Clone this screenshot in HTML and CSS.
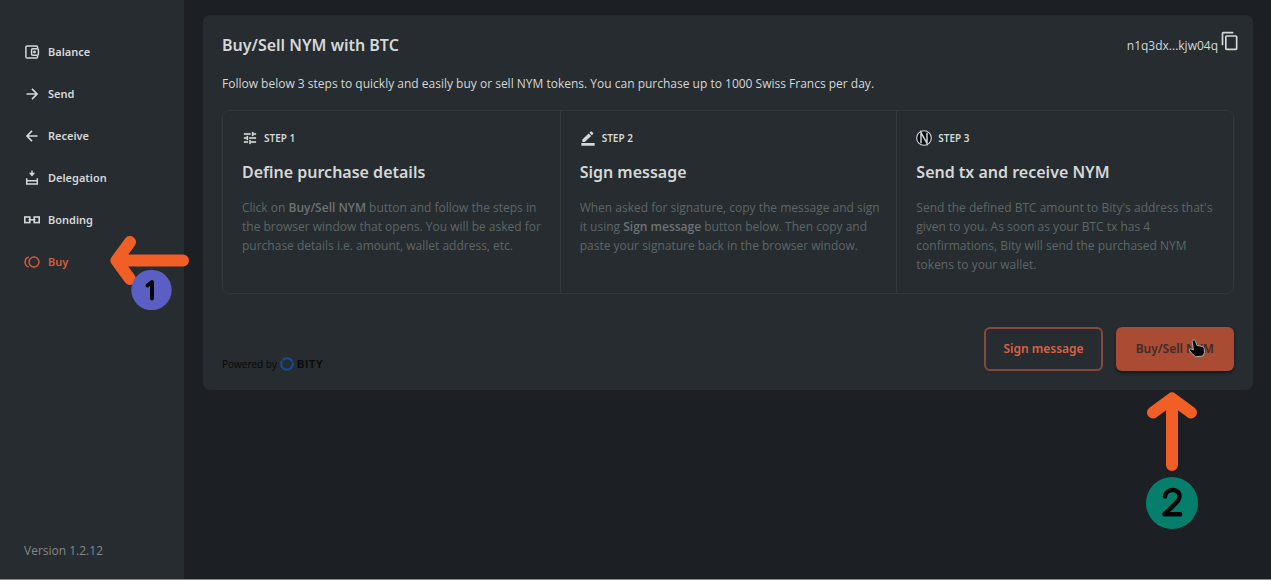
FILE: index.html
```html
<!DOCTYPE html>
<html lang="en">
<head>
<meta charset="utf-8">
<meta name="viewport" content="width=device-width, initial-scale=1">
<title>Nym Wallet - Buy</title>
<link rel="stylesheet" href="styles.css">
</head>
<body>
<div class="app">
  <aside class="sidebar">
    <nav class="nav">
      <a class="nav-item" href="#balance">
        <svg class="nav-icon" viewBox="0 0 16 16" fill="none" stroke="currentColor" stroke-width="1.5"><path d="M13.6 4V3.2a1.3 1.3 0 0 0-1.3-1.3H3.2a1.3 1.3 0 0 0-1.3 1.3v9.6a1.3 1.3 0 0 0 1.3 1.3h9.1a1.3 1.3 0 0 0 1.3-1.3V12"/><rect x="7.6" y="4.7" width="6.8" height="6.6" rx="1"/><circle cx="10.5" cy="8" r=".7"/></svg>
        <span>Balance</span>
      </a>
      <a class="nav-item" href="#send">
        <svg class="nav-icon" viewBox="0 0 16 16" fill="none" stroke="currentColor" stroke-width="1.6"><path d="M2.5 8h10.3M8 2.9 13.1 8 8 13.1"/></svg>
        <span>Send</span>
      </a>
      <a class="nav-item" href="#receive">
        <svg class="nav-icon" viewBox="0 0 16 16" fill="none" stroke="currentColor" stroke-width="1.6"><path d="M13.5 8H3.2M8 2.9 2.9 8 8 13.1"/></svg>
        <span>Receive</span>
      </a>
      <a class="nav-item" href="#delegation">
        <svg class="nav-icon" viewBox="0 0 16 16" fill="none" stroke="currentColor" stroke-width="1.5"><path d="M2.7 8.200v5.800h10.600V8.200M2.700 10.800h10.600"/><path d="M7.300.6h1.400v2.200h2.400L8 6.400 4.900 2.800h2.400z" fill="currentColor" stroke="none"/></svg>
        <span>Delegation</span>
      </a>
      <a class="nav-item" href="#bonding">
        <svg class="nav-icon" viewBox="0 0 16 16" fill="none" stroke="currentColor" stroke-width="1.6"><rect x=".8" y="5" width="5" height="5.600"/><rect x="10.200" y="5" width="5" height="5.600"/><path d="M4.500 7.800h7"/></svg>
        <span>Bonding</span>
      </a>
      <a class="nav-item nav-item-active" href="#buy" aria-current="page">
        <svg class="nav-icon" viewBox="0 0 16 16" fill="none" stroke="currentColor" stroke-width="1.400"><circle cx="10" cy="8" r="5"/><path d="M4.600 3a5.300 5.300 0 0 0 0 10"/></svg>
        <span>Buy</span>
        <svg class="callout callout-one" viewBox="0 0 84 80" aria-label="1"><path d="M20 12 6.500 30.500 20 49M7 30.500h66" fill="none" stroke="#f15f27" stroke-width="12" stroke-linecap="round" stroke-linejoin="round"/><circle cx="41.500" cy="60" r="20.200" fill="#5b5fc4"/><path d="M37.500 55.500 42 52v16.500" fill="none" stroke="#050508" stroke-width="4" stroke-linecap="round" stroke-linejoin="round"/></svg>
      </a>
    </nav>
    <p class="version">Version 1.2.12</p>
  </aside>

  <main class="main">
    <section class="card">
      <header class="card-head">
        <h1 class="title">Buy/Sell NYM with BTC</h1>
        <div class="wallet">
          <span class="address">n1q3dx...kjw04q</span>
          <button class="copy" type="button" aria-label="Copy address">
            <svg viewBox="0 0 24 24" fill="currentColor"><path d="M16 1H4c-1.100 0-2 .9-2 2v14h2V3h12V1zm3 4H8c-1.100 0-2 .9-2 2v14c0 1.100.9 2 2 2h11c1.100 0 2-.9 2-2V7c0-1.100-.9-2-2-2zm0 16H8V7h11v14z"/></svg>
          </button>
        </div>
      </header>
      <p class="intro">Follow below 3 steps to quickly and easily buy or sell NYM tokens. You can purchase up to 1000 Swiss Francs per day.</p>
      <div class="steps">
        <article class="step">
          <div class="step-label">
            <svg viewBox="0 0 24 24" fill="currentColor"><path d="M3 17v2h6v-2H3zM3 5v2h10V5H3zm10 16v-2h8v-2h-8v-2h-2v6h2zM7 9v2H3v2h4v2h2V9H7zm14 4v-2H11v2h10zm-6-4h2V7h4V5h-4V3h-2v6z" stroke="currentColor" stroke-width=".4"/></svg>
            <span>STEP 1</span>
          </div>
          <h2 class="step-title">Define purchase details</h2>
          <p class="step-text">Click on <strong>Buy/Sell NYM</strong> button and follow the steps in the browser window that opens. You will be asked for purchase details i.e. amount, wallet address, etc.</p>
        </article>
        <article class="step">
          <div class="step-label">
            <svg viewBox="0 0 24 24" fill="currentColor"><path d="M2 19.500h20v4H2zM3.500 14.300V18h3.700L16.700 9 13 5.300zM19.700 6a1 1 0 0 0 0-1.400L17.400 2.300a1 1 0 0 0-1.400 0L14.100 4.200 17.800 7.900z"/></svg>
            <span>STEP 2</span>
          </div>
          <h2 class="step-title">Sign message</h2>
          <p class="step-text">When asked for signature, copy the message and sign it using <strong>Sign message</strong> button below. Then copy and paste your signature back in the browser window.</p>
        </article>
        <article class="step">
          <div class="step-label">
            <svg viewBox="0 0 24 24" fill="none" stroke="currentColor"><circle cx="12" cy="12" r="11" fill="#0b0e10" stroke-width="1.600"/><path d="M7.500 20V4L16.500 20V4" stroke-width="2.200"/></svg>
            <span>STEP 3</span>
          </div>
          <h2 class="step-title">Send tx and receive NYM</h2>
          <p class="step-text">Send the defined BTC amount to Bity's address that's given to you. As soon as your BTC tx has 4 confirmations, Bity will send the purchased NYM tokens to your wallet.</p>
        </article>
      </div>
      <footer class="card-foot">
        <div class="powered">
          <span>Powered by</span>
          <svg class="bity-ring" viewBox="0 0 14 14" fill="none" stroke="#174c9c" stroke-width="2"><circle cx="7" cy="7" r="5.800" stroke-dasharray="11.400 .747" transform="rotate(97 7 7)"/></svg>
          <span class="bity">BITY</span>
        </div>
        <div class="actions">
          <button class="btn btn-outline" type="button">Sign message</button>
          <div class="action-target">
            <button class="btn btn-solid" type="button">Buy/Sell NYM</button>
            <svg class="pointer" viewBox="0 0 18 20" aria-hidden="true"><path d="M5.200 2.200c1-.6 2 0 2.300.9l1.400 4.200 5.300 1.200c1.200.3 1.900 1.100 2 2.200l.3 4-1.500 3.300-7.600.8-3-3-2.900-3.200c-.6-1 .3-2 1.500-1.700l2.400 1L4.200 4c-.2-.8.200-1.500 1-1.800z" fill="#050505" stroke="#a9b4b8" stroke-width="1"/></svg>
            <svg class="callout callout-two" viewBox="0 0 54 138" aria-label="2"><path d="M8 21.500 27 7.500l19 14M27 9v65" fill="none" stroke="#f15f27" stroke-width="12" stroke-linecap="round" stroke-linejoin="round"/><circle cx="27" cy="112" r="26" fill="#057f6c"/><path d="M20 105.500c1-8.500 14.500-8.500 14.500-.3 0 3.300-2 5.300-4.500 7.800L19.500 123.200h15.700" fill="none" stroke="#030606" stroke-width="4.500" stroke-linecap="round" stroke-linejoin="round"/></svg>
          </div>
        </div>
      </footer>
    </section>
  </main>
</div>
</body>
</html>
```
FILE: styles.css
```css
*, *::before, *::after { box-sizing: border-box; }
body {
  margin: 0;
  background: #1c1f24;
  color: #d5d8d8;
  font-family: "Open Sans", "Noto Sans", sans-serif;
  font-size: 12px;
  line-height: 20px;
}
h1, h2, p { margin: 0; }
svg { display: block; flex: none; }
button { font: inherit; cursor: pointer; }
.app { display: flex; min-height: 100vh; border-bottom: 1px solid #85898b; }

.sidebar {
  display: flex;
  flex-direction: column;
  justify-content: space-between;
  flex: none;
  width: 184px;
  padding: 31px 0 18px 24px;
  background: #262c2f;
}
.nav { display: flex; flex-direction: column; }
.nav-item {
  position: relative;
  display: flex;
  align-items: center;
  gap: 8px;
  padding: 11px 0;
  color: #d5d8d8;
  font-family: "Noto Sans", sans-serif;
  font-size: 11px;
  font-weight: 600;
  text-decoration: none;
}
.nav-item-active { color: #d75c3c; }
.nav-icon { width: 16px; height: 16px; }
.version { color: #83888a; }

.callout { position: absolute; z-index: 2; pointer-events: none; }
.callout-one { left: 86px; top: -11px; width: 84px; height: 80px; }
.callout-two { left: 50%; top: 64px; width: 54px; height: 138px; margin-left: -30px; }

.main { flex: 1; min-width: 0; padding: 15px 18px 15px 19px; }
.card { padding: 16px 19px 19px; border-radius: 7px; background: #262c2f; }
.card-head { display: flex; align-items: center; justify-content: space-between; margin-right: -6px; }
.title { font-family: "Noto Sans", sans-serif; font-size: 16px; line-height: 28px; font-weight: 600; }
.wallet { display: flex; align-items: flex-end; gap: 2px; }
.copy { padding: 0 0 8px; border: 0; background: none; color: #d5d8d8; }
.copy svg { width: 20px; height: 20px; }
.address { padding-bottom: 3px; }
.intro { padding: 15px 0 16px; }

.steps {
  display: grid;
  grid-template-columns: repeat(3, 1fr);
  border: 1px solid #33393b;
  border-radius: 7px;
}
.step { min-height: 182px; padding: 17px 8px 16px 19px; }
.step + .step { border-left: 1px solid #33393b; }
.step-label { display: flex; align-items: center; gap: 6px; font-family: "Noto Sans", sans-serif; font-size: 10px; font-weight: 600; }
.step-label svg { width: 16px; height: 16px; }
.step-title { padding: 10px 0; font-family: "Noto Sans", sans-serif; font-size: 16px; line-height: 28px; font-weight: 600; }
.step-text { padding-top: 2px; color: #5f6668; line-height: 19px; }
.step-text strong { font-weight: 600; color: #6d7375; }

.card-foot { display: flex; align-items: flex-end; justify-content: space-between; padding-top: 33px; }
.powered { display: flex; align-items: center; gap: 3px; color: #07090a; font-size: 10px; line-height: 12px; }
.bity-ring { width: 14px; height: 14px; }
.bity { padding-top: 2px; font-family: "Liberation Sans", sans-serif; font-weight: 700; letter-spacing: 1px; }
.actions { display: flex; gap: 13px; }
.action-target { position: relative; }
.btn { min-height: 44px; padding: 0 17px; border-radius: 6px; font-family: "Noto Sans", sans-serif; font-weight: 600; }
.btn-outline { border: 2px solid #85493b; background: transparent; color: #dd6043; }
.btn-solid { padding: 0 20px; border: 0; background: #aa4b33; color: #3b2d2b; box-shadow: 0 2px 3px #15191b; }
.pointer { position: absolute; right: 28px; top: 11px; width: 18px; height: 20px; }
```
